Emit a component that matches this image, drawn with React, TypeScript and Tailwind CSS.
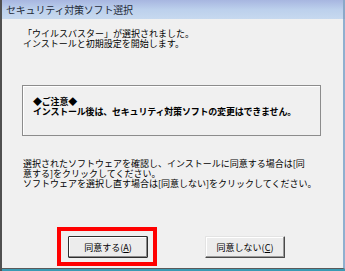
import React from 'react';

const font = { fontFamily: '"Noto Sans CJK JP", "Noto Sans", sans-serif' };

function DialogButton({ label, hotkey, isDefault = false }: { label: string; hotkey: string; isDefault?: boolean }) {
  return (
    <button
      className={`w-[80px] h-[22px] flex items-center justify-center text-[9px] leading-none text-black bg-[#ececec] rounded-[1px] ${
        isDefault
          ? 'border border-[#2e2e2e] shadow-[inset_-1px_-1px_0_#8a8a8a,inset_1px_1px_0_#ffffff]'
          : 'border border-t-[#e3e3e3] border-l-[#e3e3e3] border-r-[#4a4a4a] border-b-[#4a4a4a] shadow-[inset_-1px_-1px_0_#9a9a9a,inset_1px_1px_0_#ffffff]'
      }`}
    >
      <span>
        {label}(<span className="underline">{hotkey}</span>)
      </span>
    </button>
  );
}

export default function App() {
  return (
    <div
      style={font}
      className="w-[345px] h-[271px] flex flex-col bg-[#3a9ab3] border-l-2 border-l-[#505050] overflow-hidden"
    >
      {/* Title bar */}
      <div className="h-[19px] flex items-center pl-[4px] bg-linear-to-b from-[#a7b6e0] via-[#bcd0ec] to-[#c7d9ef] border-r-2 border-r-[#8aa8c8]">
        <span className="text-[10px] text-[#1f2a38] leading-none tracking-[-0.2px]">セキュリティ対策ソフト選択</span>
      </div>

      {/* Client area */}
      <div className="relative flex-1 flex flex-col bg-[#f0f0f0] border-b border-b-[#5a5a5a] border-r-2 border-r-[#8fb0cf] mb-[2px] text-black">
        <div className="pt-[10px] pl-[21px] text-[9px] leading-[10px] whitespace-nowrap">
          <div>「ウイルスバスター」が選択されました。</div>
          <div>インストールと初期設定を開始します。</div>
        </div>

        <div className="mt-[36px] ml-[20px] w-[299px] h-[51px] border border-[#8c8c8c] shadow-[inset_1px_1px_0_#ffffff] pt-[11px] pl-[10px] text-[9px] leading-[10px] font-bold tracking-[-0.2px] whitespace-nowrap">
          <div>◆ご注意◆</div>
          <div>インストール後は、セキュリティ対策ソフトの変更はできません。</div>
        </div>

        <div className="mt-[23px] pl-[21px] text-[9px] leading-[10px] whitespace-nowrap">
          <div>選択されたソフトウェアを確認し、インストールに同意する場合は[同</div>
          <div>意する]をクリックしてください。</div>
          <div>ソフトウェアを選択し直す場合は[同意しない]をクリックしてください。</div>
        </div>

        <div className="mt-[47px] flex items-center pl-[66px] gap-[57px]">
          <div className="relative">
            <DialogButton label="同意する" hotkey="A" isDefault />
            <div className="absolute left-[-11px] right-[-9px] top-[-9px] bottom-[-8px] border-4 border-[#ff0000] pointer-events-none" />
          </div>
          <DialogButton label="同意しない" hotkey="C" />
        </div>
      </div>
    </div>
  );
}
